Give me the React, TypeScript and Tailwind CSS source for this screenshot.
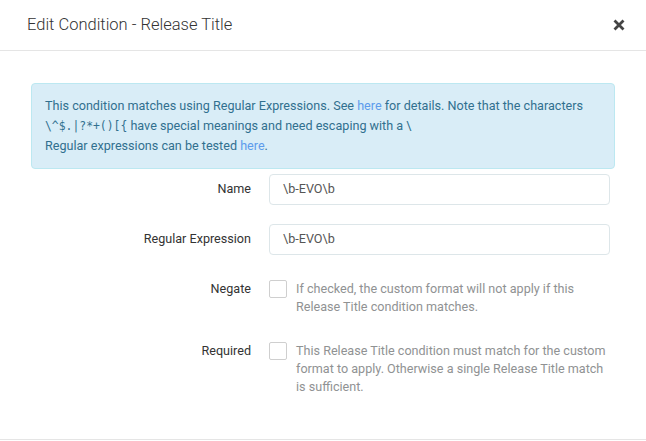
import React from "react";

function Checkbox() {
  return <div className="h-[18px] w-[18px] shrink-0 rounded-[2px] border border-[#cfcfcf] bg-white" />;
}

export default function App() {
  return (
    <div className="h-[441px] w-[646px] overflow-hidden bg-white font-['Roboto',sans-serif] text-[12.6px] text-[#515253]">
      <div className="flex h-[51px] items-center justify-between border-b border-[#e5e5e5] pl-[27px] pr-[21px]">
        <div className="text-[16.5px] font-light text-[#333]">Edit Condition - Release Title</div>
        <svg width="12" height="12" viewBox="0 0 12 12" className="text-[#444]">
          <path d="M1.5 1.5 L10.5 10.5 M10.5 1.5 L1.5 10.5" stroke="currentColor" strokeWidth="2.8" strokeLinecap="butt" />
        </svg>
      </div>
      <div className="flex h-[389px] flex-col border-b border-[#e5e5e5] pl-[31px] pr-[31px] pt-[32px]">
        <div className="rounded-[4px] border border-[#bce8f1] bg-[#d9edf7] px-[13px] pb-[12px] pt-[12px] text-[12.6px] leading-[19.5px] text-[#31708f]">
          <div>
            This condition matches using Regular Expressions. See <span className="text-[#5d9cec]">here</span> for details. Note that the characters{" "}
            <span className="font-['DejaVu_Sans_Mono',monospace] text-[11.4px]">{"\\^$.|?*+()[{"}</span> have special meanings and need escaping with a \
          </div>
          <div>
            Regular expressions can be tested <span className="text-[#5d9cec]">here</span>.
          </div>
        </div>

        <div className="mt-[5px] flex items-center">
          <div className="w-[238px] pr-[18px] text-right text-[#333]">Name</div>
          <div className="flex h-[31px] w-[341px] items-center rounded-[4px] border border-[#dde6e9] px-[13px] text-[#555]">\b-EVO\b</div>
        </div>

        <div className="mt-[19px] flex items-center">
          <div className="w-[238px] pr-[18px] text-right text-[#333]">Regular Expression</div>
          <div className="flex h-[31px] w-[341px] items-center rounded-[4px] border border-[#dde6e9] px-[13px] text-[#555]">\b-EVO\b</div>
        </div>

        <div className="mt-[25px] flex items-start">
          <div className="w-[238px] pr-[18px] text-right leading-[18px] text-[#333]">Negate</div>
          <Checkbox />
          <div className="ml-[9px] w-[314px] leading-[18px] text-[#909293]">
            If checked, the custom format will not apply if this Release Title condition matches.
          </div>
        </div>

        <div className="mt-[26px] flex items-start">
          <div className="w-[238px] pr-[18px] text-right leading-[18px] text-[#333]">Required</div>
          <Checkbox />
          <div className="ml-[9px] w-[314px] leading-[18px] text-[#909293]">
            This Release Title condition must match for the custom format to apply. Otherwise a single Release Title match is sufficient.
          </div>
        </div>
      </div>
    </div>
  );
}
